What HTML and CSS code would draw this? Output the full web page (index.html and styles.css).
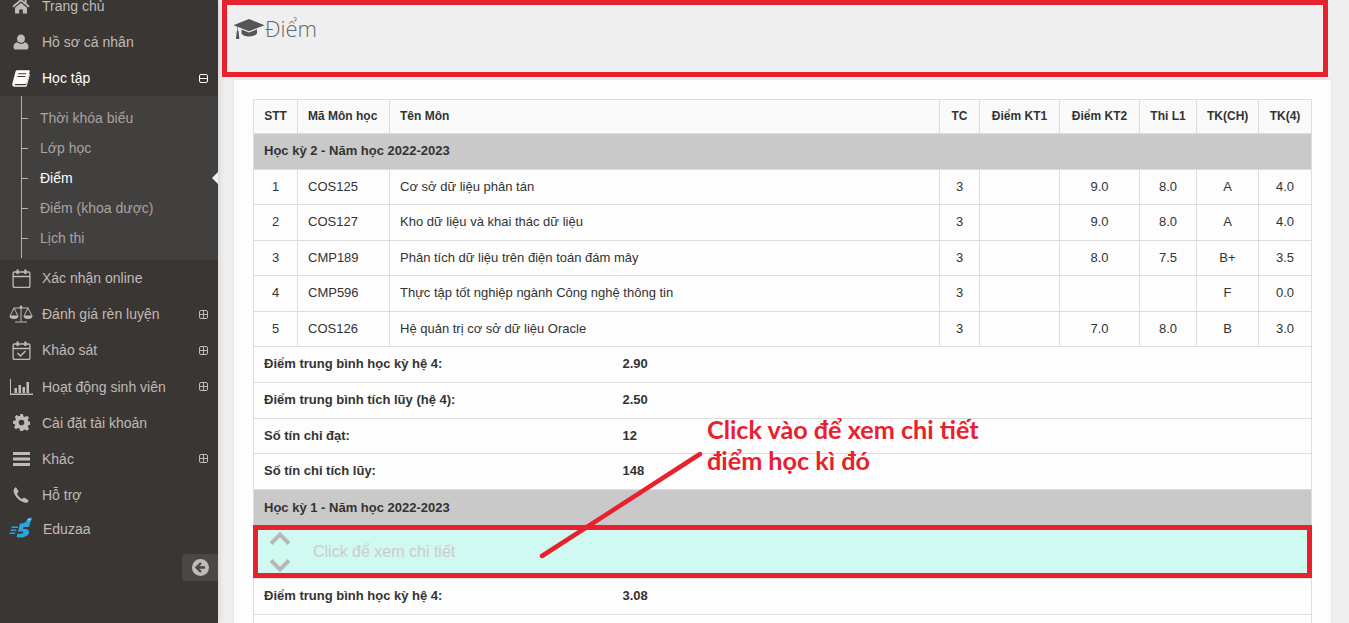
FILE: index.html
```html
<!DOCTYPE html>
<html lang="en">

<head>
    <meta charset="UTF-8">
    <meta name="viewport" content="width=device-width, initial-scale=1.0">
    <title>Điểm</title>
    <link rel="stylesheet" href="styles.css">
</head>

<body>
    <div class="page">
        <aside class="sidebar">
            <ul class="menu">
                <li class="menuItem">
                    <span class="menuIcon"><svg width="18" height="16" viewBox="0 0 18 16"><path fill="currentColor" d="M9 .8.4 8.1l1.1 1.3L9 3.2l7.5 6.2 1.1-1.3-3-2.6V2h-2v1.9zM9 4.7 3 9.7v5.8h4.200v-4h3.600v4H15V9.700z"/></svg></span>
                    <span>Trang chủ</span>
                </li>
                <li class="menuItem">
                    <span class="menuIcon"><svg width="16" height="16" viewBox="0 0 16 16"><path fill="currentColor" d="M8 .5a4 4 0 0 1 3.900 4.200A4 4 0 0 1 8 8.800a4 4 0 0 1-3.900-4.100A4 4 0 0 1 8 .5zM4.300 8.300C5.300 9.300 6.600 9.800 8 9.800s2.700-.5 3.700-1.500c2.300.3 3.800 2 3.800 4.600 0 1.600-1 2.600-2.500 2.600H3C1.500 15.500.5 14.500.5 12.900c0-2.600 1.500-4.300 3.800-4.600z"/></svg></span>
                    <span>Hồ sơ cá nhân</span>
                </li>
                <li class="menuItem active">
                    <span class="menuIcon"><svg width="18" height="17" viewBox="0 0 18 17"><path fill="currentColor" d="M5.200.2h11.600c.8 0 1.100.5.9 1.200l-3 11c-.3 1.100-1 1.600-2 1.600H3.500c-.9 0-1.100 1-.2 1.300h9.900c.6 0 .9-.2 1.100-.8l3-10.800.7.500-3 11c-.3.900-1 1.600-2 1.600H2.700C1.100 16.800 0 15.500.3 13.700.4 13 .7 12.300.9 11.600L3.500 1.700C3.800.7 4.300.2 5.200.2zM6.400 3.200l-.3 1h8l.3-1zM5.500 6l-.3 1h8l.3-1z"/></svg></span>
                    <span>Học tập</span>
                    <svg class="toggle" width="9" height="9" viewBox="0 0 9 9"><rect x=".5" y=".5" width="8" height="8" rx="1.500" fill="none" stroke="currentColor"/><path stroke="currentColor" d="M1 4.500h7"/></svg>
                </li>
                <li>
                    <ul class="subMenu">
                        <li class="subItem">Thời khóa biểu</li>
                        <li class="subItem">Lớp học</li>
                        <li class="subItem current">Điểm<span class="caret"></span></li>
                        <li class="subItem">Điểm (khoa dược)</li>
                        <li class="subItem">Lịch thi</li>
                    </ul>
                </li>
                <li class="menuItem">
                    <span class="menuIcon"><svg width="19" height="19" viewBox="0 0 19 19"><path fill="none" stroke="currentColor" stroke-width="1.300" d="M2.500 3h14c.8 0 1.400.6 1.400 1.400v12.700c0 .8-.6 1.400-1.400 1.400h-14c-.8 0-1.400-.6-1.400-1.400V4.400c0-.8.6-1.400 1.400-1.400zM1 7.500h17"/><path fill="currentColor" d="M4.500.5h2.200v4.500H4.500zM12.300.5h2.200v4.500h-2.200z"/></svg></span>
                    <span>Xác nhận online</span>
                </li>
                <li class="menuItem">
                    <span class="menuIcon"><svg width="24" height="18" viewBox="0 0 24 18"><path fill="none" stroke="currentColor" d="M12 1.500v15M6 17h12M4.500 3h15M5 3 1 11h8zM19 3l-4 8h8z"/><circle cx="12" cy="2" r="1.500" fill="currentColor"/><path fill="currentColor" d="M.5 11h9c0 2-2 3-4.500 3S.5 13 .5 11zM14.500 11h9c0 2-2 3-4.500 3s-4.500-1-4.500-3z"/></svg></span>
                    <span>Đánh giá rèn luyện</span>
                    <svg class="toggle" width="9" height="9" viewBox="0 0 9 9"><rect x=".5" y=".5" width="8" height="8" rx="1.500" fill="none" stroke="currentColor"/><path stroke="currentColor" d="M1 4.500h7M4.500 1v7"/></svg>
                </li>
                <li class="menuItem">
                    <span class="menuIcon"><svg width="19" height="19" viewBox="0 0 19 19"><path fill="none" stroke="currentColor" stroke-width="1.300" d="M2.500 3h14c.8 0 1.400.6 1.400 1.400v12.700c0 .8-.6 1.400-1.400 1.400h-14c-.8 0-1.400-.6-1.400-1.400V4.400c0-.8.6-1.400 1.400-1.400zM1 7.500h17"/><path fill="currentColor" d="M4.500.5h2.200v4.500H4.500zM12.300.5h2.200v4.500h-2.200z"/><path fill="none" stroke="currentColor" stroke-width="1.500" d="m5.500 12 3 3 5-5"/></svg></span>
                    <span>Khảo sát</span>
                    <svg class="toggle" width="9" height="9" viewBox="0 0 9 9"><rect x=".5" y=".5" width="8" height="8" rx="1.500" fill="none" stroke="currentColor"/><path stroke="currentColor" d="M1 4.500h7M4.500 1v7"/></svg>
                </li>
                <li class="menuItem">
                    <span class="menuIcon"><svg width="23" height="16" viewBox="0 0 23 16"><path fill="currentColor" d="M0 0h1v14.500h22V16H0zM4.500 9H7v5H4.500zM8.500 6H11v8H8.500zM12.500 8H15v6h-2.500zM16.500 3H19v11h-2.500z"/></svg></span>
                    <span>Hoạt động sinh viên</span>
                    <svg class="toggle" width="9" height="9" viewBox="0 0 9 9"><rect x=".5" y=".5" width="8" height="8" rx="1.500" fill="none" stroke="currentColor"/><path stroke="currentColor" d="M1 4.500h7M4.500 1v7"/></svg>
                </li>
                <li class="menuItem">
                    <span class="menuIcon"><svg width="17" height="17" viewBox="0 0 24 24"><path fill="currentColor" fill-rule="evenodd" d="M10 0h4l.8 3.400 2 .8 3-1.800 2.800 2.800-1.800 3 .8 2 3.400.8v4l-3.400.8-.8 2 1.800 3-2.800 2.800-3-1.800-2 .8L14 24h-4l-.8-3.400-2-.8-3 1.800-2.800-2.800 1.800-3-.8-2L0 14v-4l3.400-.8.8-2-1.800-3 2.800-2.800 3 1.800 2-.8zM12 8a4 4 0 1 0 0 8 4 4 0 0 0 0-8z"/></svg></span>
                    <span>Cài đặt tài khoản</span>
                </li>
                <li class="menuItem">
                    <span class="menuIcon"><svg width="17" height="14" viewBox="0 0 17 14"><path fill="currentColor" d="M0 0h17v3H0zM0 5.500h17v3H0zM0 11h17v3H0z"/></svg></span>
                    <span>Khác</span>
                    <svg class="toggle" width="9" height="9" viewBox="0 0 9 9"><rect x=".5" y=".5" width="8" height="8" rx="1.500" fill="none" stroke="currentColor"/><path stroke="currentColor" d="M1 4.500h7M4.500 1v7"/></svg>
                </li>
                <li class="menuItem">
                    <span class="menuIcon"><svg width="16" height="16" viewBox="0 0 16 16"><path fill="currentColor" d="M3.200.5 5.500 4.200c.2.400.1.800-.2 1.100L4 6.500c.8 2.200 2.700 4.400 5 5.500l1.300-1.100c.4-.3.800-.3 1.200-.1l3.700 2.200c.5.300.5.700.2 1.200-.7 1.100-2 1.800-3.400 1.500C6.500 14.500 1.800 9.500.7 4.800.4 3.200 1 1.600 2.100.8c.4-.4.800-.6 1.100-.3z"/></svg></span>
                    <span>Hỗ trợ</span>
                </li>
                <li class="menuItem eduzaa">
                    <span class="menuIcon"><svg width="24" height="24" viewBox="0 0 24 24"><path fill="#2ba6de" d="M11 6.500c3 0 5-.5 6-2 1-2.500 3-4 5-4l1.500 1.500c-1.500 1-2 2.500-2.500 4.500l-1 3.500h-5.500l-.5 2c4-.5 7 1 6 4-1 3.500-7 5.500-12.500 4l1-3.500c2.500.7 5.500.3 5.900-1 .3-1-1.900-1.300-5.400-.5z"/><path fill="#2ba6de" d="M2.800 9.500h6.400l-.4 1.500h-6.400zM1.800 12.500h5.800l-.4 1.500H1.400zM.8 15.500h5.600l-.4 1.500H.4z"/><path fill="#fff" d="M19.500 2h1.200v1.200h-1.200z"/></svg></span>
                    <span>Eduzaa</span>
                </li>
            </ul>
            <div class="collapseBtn">
                <svg width="17" height="17" viewBox="0 0 17 17"><circle cx="8.500" cy="8.500" r="8.500" fill="currentColor"/><path fill="none" stroke="#4a4744" stroke-width="2.400" d="M9 4 4.500 8.500 9 13M5 8.500h8"/></svg>
            </div>
        </aside>

        <main class="main">
            <header class="pageHeader">
                <svg class="capIcon" width="31" height="22" viewBox="0 0 31 22"><path fill="#555" d="M15 1 30.500 7.200 15 13.300 4 9v3.500c.6.300.8 1.500.8 2.500l.5 6H2l.6-6c0-1 .2-2.200.8-2.500V8.700L-.5 7.200zM7.500 11.500l7.500 3 8-3.200v4.200c-1.500 2-4.500 3-8 3s-6.500-1-7.500-3z"/></svg>
                <h1 class="pageTitle">Điểm</h1>
            </header>

            <section class="panel">
                <table class="gradeTable">
                    <colgroup>
                        <col class="colStt">
                        <col class="colCode">
                        <col>
                        <col class="colTc">
                        <col class="colScore">
                        <col class="colScore">
                        <col class="colExam">
                        <col class="colLetter">
                        <col class="colFinal">
                    </colgroup>
                    <thead>
                        <tr>
                            <th class="center">STT</th>
                            <th>Mã Môn học</th>
                            <th>Tên Môn</th>
                            <th class="center">TC</th>
                            <th class="center">Điểm KT1</th>
                            <th class="center">Điểm KT2</th>
                            <th class="center">Thi L1</th>
                            <th class="center">TK(CH)</th>
                            <th class="center">TK(4)</th>
                        </tr>
                    </thead>
                    <tbody>
                        <tr class="semester"><td colspan="9">Học kỳ 2 - Năm học 2022-2023</td></tr>
                        <tr>
                            <td class="center">1</td><td>COS125</td><td>Cơ sở dữ liệu phân tán</td><td class="center">3</td>
                            <td></td><td class="center">9.0</td><td class="center">8.0</td><td class="center">A</td><td class="center">4.0</td>
                        </tr>
                        <tr>
                            <td class="center">2</td><td>COS127</td><td>Kho dữ liệu và khai thác dữ liệu</td><td class="center">3</td>
                            <td></td><td class="center">9.0</td><td class="center">8.0</td><td class="center">A</td><td class="center">4.0</td>
                        </tr>
                        <tr>
                            <td class="center">3</td><td>CMP189</td><td>Phân tích dữ liệu trên điện toán đám mây</td><td class="center">3</td>
                            <td></td><td class="center">8.0</td><td class="center">7.5</td><td class="center">B+</td><td class="center">3.5</td>
                        </tr>
                        <tr>
                            <td class="center">4</td><td>CMP596</td><td>Thực tập tốt nghiệp ngành Công nghệ thông tin</td><td class="center">3</td>
                            <td></td><td></td><td></td><td class="center">F</td><td class="center">0.0</td>
                        </tr>
                        <tr>
                            <td class="center">5</td><td>COS126</td><td>Hệ quản trị cơ sở dữ liệu Oracle</td><td class="center">3</td>
                            <td></td><td class="center">7.0</td><td class="center">8.0</td><td class="center">B</td><td class="center">3.0</td>
                        </tr>
                        <tr class="summary"><td colspan="9"><div class="summaryRow"><span class="summaryLabel">Điểm trung bình học kỳ hệ 4:</span><span>2.90</span></div></td></tr>
                        <tr class="summary"><td colspan="9"><div class="summaryRow"><span class="summaryLabel">Điểm trung bình tích lũy (hệ 4):</span><span>2.50</span></div></td></tr>
                        <tr class="summary"><td colspan="9"><div class="summaryRow"><span class="summaryLabel">Số tín chỉ đạt:</span><span>12</span></div></td></tr>
                        <tr class="summary"><td colspan="9"><div class="summaryRow"><span class="summaryLabel">Số tín chỉ tích lũy:</span><span>148</span></div></td></tr>
                        <tr class="semester later"><td colspan="9">Học kỳ 1 - Năm học 2022-2023</td></tr>
                        <tr class="expand">
                            <td colspan="9">
                                <div class="expandRow">
                                    <div class="chevrons">
                                        <svg width="22" height="14" viewBox="0 0 22 14"><path fill="none" stroke="currentColor" stroke-width="4" d="M2 12.500 11 3.500l9 9"/></svg>
                                        <svg width="22" height="14" viewBox="0 0 22 14"><path fill="none" stroke="currentColor" stroke-width="4" d="m2 1.500 9 9 9-9"/></svg>
                                    </div>
                                    <span>Click để xem chi tiết</span>
                                </div>
                            </td>
                        </tr>
                        <tr class="summary"><td colspan="9"><div class="summaryRow"><span class="summaryLabel">Điểm trung bình học kỳ hệ 4:</span><span>3.08</span></div></td></tr>
                        <tr class="summary"><td colspan="9"></td></tr>
                    </tbody>
                </table>
            </section>

            <!-- red marks drawn over the screenshot -->
            <div class="markBox markHeader"></div>
            <div class="markBox markRow"></div>
            <svg class="markLine" width="170" height="112" viewBox="0 0 170 112"><path stroke="#e8212e" stroke-width="4.500" stroke-linecap="round" d="M3 108 161 6"/></svg>
            <p class="markNote">Click vào để xem chi tiết<br>điểm học kì đó</p>
        </main>
    </div>
</body>

</html>
```

FILE: styles.css
```css
html,
body {
    margin: 0;
    height: 100%;
    overflow: hidden;
}

body {
    font-family: "Liberation Sans", Arial, sans-serif;
    font-size: 13px;
    color: #333;
    background-color: #efefef;
}

ul {
    list-style: none;
    margin: 0;
    padding: 0;
}

.page {
    display: flex;
    height: 623px;
    overflow: hidden;
}

/* sidebar */
.sidebar {
    display: flex;
    flex-direction: column;
    flex: 0 0 218px;
    background-color: #3a3633;
    color: #c0bbb7;
    font-size: 14px;
    box-shadow: 1px 0 6px rgba(0, 0, 0, 0.12);
}

.menu {
    margin-top: -12.1px;
}

.menuItem {
    display: flex;
    align-items: center;
    height: 36.1px;
}

.menuItem.active {
    color: #ffffff;
}

.menuItem.eduzaa {
    height: 32px;
}

.menuItem.eduzaa span:last-child {
    margin-left: 1px;
}

.menuIcon {
    display: flex;
    justify-content: center;
    align-items: center;
    flex: 0 0 42px;
}

.toggle {
    margin-left: auto;
    margin-right: 10px;
}

.subMenu {
    padding: 7px 0;
    padding-left: 21px;
    background-color: #423f3f;
    background-image: linear-gradient(#b5b0ac, #b5b0ac);
    background-size: 1px calc(100% - 2px);
    background-repeat: no-repeat;
    background-position: 21px 0;
}

.subItem {
    display: flex;
    align-items: center;
    height: 30px;
    color: #a8a39f;
}

.subItem::before {
    content: "";
    width: 7px;
    height: 1px;
    margin-right: 12px;
    background-color: #b5b0ac;
}

.subItem.current {
    color: #ffffff;
}

.caret {
    margin-left: auto;
    border-top: 6px solid transparent;
    border-bottom: 6px solid transparent;
    border-right: 6px solid #efefef;
}

.collapseBtn {
    display: flex;
    align-items: center;
    justify-content: center;
    align-self: flex-end;
    width: 36px;
    height: 27px;
    margin-top: 9px;
    border-radius: 4px 0 0 4px;
    background-color: #4a4744;
    color: #c0bbb7;
}

/* main area */
.main {
    position: relative;
    flex: 1;
    min-width: 0;
    padding: 0 17px 0 15px;
}

.pageHeader {
    display: flex;
    align-items: center;
    height: 79px;
    padding-bottom: 24px;
    padding-left: 1px;
    box-sizing: border-box;
}

.capIcon {
    flex: none;
    margin-top: 2px;
}

.pageTitle {
    margin: 0;
    font-family: "Open Sans", sans-serif;
    font-size: 22px;
    font-weight: 300;
    color: #666;
}

.panel {
    padding: 19px 19px;
    height: 600px;
    background-color: #fdfdfd;
    border: 1px solid #e6e6e6;
}

.gradeTable {
    width: 100%;
    table-layout: fixed;
    border-collapse: collapse;
}

.colStt { width: 44px; }
.colCode { width: 92px; }
.colTc { width: 40px; }
.colScore { width: 80px; }
.colExam { width: 57px; }
.colLetter { width: 62px; }
.colFinal { width: 53px; }

.gradeTable th,
.gradeTable td {
    padding: 8px 10px;
    border: 1px solid #dddddd;
    font-size: 13px;
    line-height: 18.57px;
    text-align: left;
    white-space: nowrap;
}

.gradeTable th {
    padding-top: 7px;
    padding-bottom: 7px;
    background-color: #fafafa;
    font-size: 12px;
    font-weight: bold;
}

.gradeTable .center {
    text-align: center;
}

.gradeTable .semester td {
    padding-top: 8.25px;
    padding-bottom: 8.25px;
    background-color: #c9c9c9;
    font-weight: bold;
}

.gradeTable .semester.later td {
    padding-top: 9.5px;
    padding-bottom: 7.5px;
}

.summaryRow {
    display: flex;
    font-weight: bold;
}

.summaryLabel {
    flex: 0 0 358.5px;
}

.gradeTable .expand td {
    padding: 0 10px;
    background-color: #cff9f1;
    height: 52px;
    font-size: 16px;
    color: #cccccc;
}

.expandRow {
    display: flex;
    align-items: center;
    gap: 22px;
    padding-left: 5px;
}

.chevrons {
    display: flex;
    flex-direction: column;
    gap: 14px;
    color: #b8b8b8;
}

.chevrons svg {
    display: block;
}

/* annotations */
.markBox {
    position: absolute;
    box-sizing: border-box;
    border: 5px solid #e8212e;
}

.markHeader {
    left: 4px;
    top: 0;
    width: 1106px;
    height: 77px;
}

.markRow {
    left: 35px;
    top: 525px;
    width: 1059px;
    height: 53px;
}

.markLine {
    position: absolute;
    left: 321px;
    top: 448px;
}

.markNote {
    position: absolute;
    left: 489px;
    top: 414px;
    margin: 0;
    font-family: Lato, sans-serif;
    font-size: 25.2px;
    font-weight: bold;
    line-height: 31px;
    color: #e8212e;
}
```
